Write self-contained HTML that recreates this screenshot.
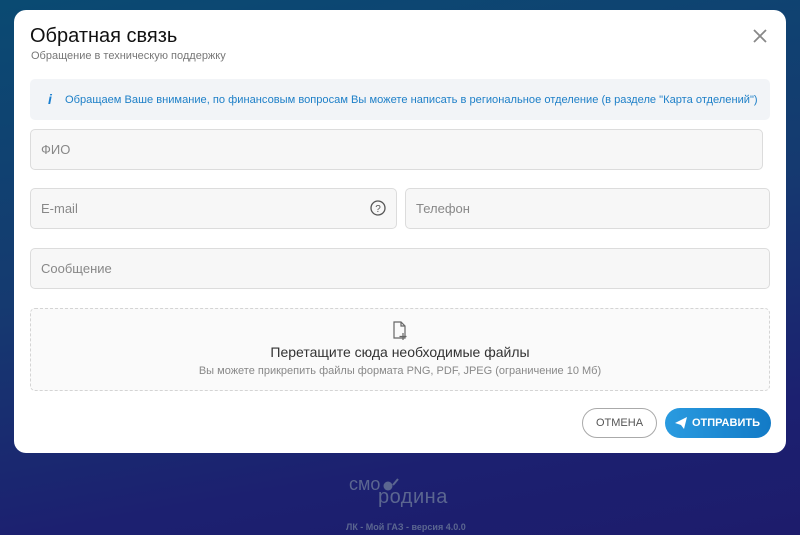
<!DOCTYPE html>
<html><head><meta charset="utf-8"><style>
*{box-sizing:border-box;margin:0;padding:0}
body{width:800px;height:535px;overflow:hidden;font-family:"Liberation Sans",sans-serif;background:linear-gradient(170deg,#0a4a72 0%,#153a70 45%,#1c2070 80%,#1d1c6c 100%);position:relative}
.m{position:absolute;left:14px;top:10px;width:772px;height:443px;background:#fff;border-radius:12px}
.ab{position:absolute}
.f{position:absolute;border:1px solid #dcdcdc;border-radius:5px;background:#f7f7f7;color:#888;font-size:13px;padding-left:10px;display:flex;align-items:center}
</style></head><body>
<div class="m">
<div class="ab" style="left:16px;top:15px;font-size:20px;color:#111">Обратная связь</div>
<div class="ab" style="left:17px;top:40px;font-size:11px;color:#777">Обращение в техническую поддержку</div>
<svg class="ab" style="left:738px;top:18px" width="16" height="16"><path d="M2 2L14 14M14 2L2 14" stroke="#888" stroke-width="1.8"/></svg>
<div class="ab" style="left:16px;top:69px;width:740px;height:41px;background:#f2f4f7;border-radius:5px"></div>
<div class="ab" style="left:34px;top:81px;font-size:14px;color:#1a7fd0;font-weight:bold;font-style:italic">i</div>
<div class="ab" style="left:51px;top:84px;font-size:11.1px;color:#1f80c8">Обращаем Ваше внимание, по финансовым вопросам Вы можете написать в региональное отделение (в разделе "Карта отделений")</div>
<div class="f" style="left:16px;top:119px;width:733px;height:41px">ФИО</div>
<div class="f" style="left:16px;top:178px;width:367px;height:41px">E-mail</div>
<svg class="ab" style="left:356px;top:190px" width="16" height="16"><circle cx="8" cy="8" r="7" fill="none" stroke="#555" stroke-width="1.3"/><text x="8" y="12" font-size="10" text-anchor="middle" fill="#555" font-family="Liberation Sans">?</text></svg>
<div class="f" style="left:391px;top:178px;width:365px;height:41px">Телефон</div>
<div class="f" style="left:16px;top:238px;width:740px;height:41px">Сообщение</div>
<div class="ab" style="left:16px;top:298px;width:740px;height:83px;border:1px dashed #d4d4d4;border-radius:5px;background:#fafafa"></div>
<svg class="ab" style="left:378px;top:311px" width="16" height="20"><path d="M2 1H9L13 5V17H2Z M9 1V5H13" fill="none" stroke="#666" stroke-width="1.2"/><path d="M11 12V19M7.5 15.5H14.5" stroke="#666" stroke-width="1.2"/></svg>
<div class="ab" style="left:0;width:772px;text-align:center;top:334px;font-size:14px;color:#333">Перетащите сюда необходимые файлы</div>
<div class="ab" style="left:0;width:772px;text-align:center;top:355px;font-size:11px;color:#888">Вы можете прикрепить файлы формата PNG, PDF, JPEG (ограничение 10 Мб)</div>
<div class="ab" style="left:568px;top:398px;width:75px;height:30px;border:1px solid #aaa;border-radius:15px;font-size:11px;color:#555;text-align:center;line-height:28px">ОТМЕНА</div>
<div class="ab" style="left:651px;top:398px;width:106px;height:30px;border-radius:15px;background:linear-gradient(90deg,#2a9be0,#127ac6);font-size:11px;color:#fff;font-weight:bold;line-height:30px;padding-left:27px">ОТПРАВИТЬ</div>
<svg class="ab" style="left:661px;top:407px" width="12" height="12"><path d="M0 6L12 0L9 12L6 8Z" fill="#fff"/></svg>
</div>
<div class="ab" style="left:349px;top:474px;font-size:18px;color:#5b6690">смо</div>
<svg class="ab" style="left:383px;top:478px" width="16" height="14"><circle cx="5" cy="8" r="4.5" fill="#5b6690"/><path d="M10 7L15 1" stroke="#5b6690" stroke-width="2"/></svg>
<div class="ab" style="left:378px;top:486px;font-size:20px;color:#5b6690;letter-spacing:0.5px">родина</div>
<div class="ab" style="left:346px;top:522px;font-size:9px;color:#5b6690;font-weight:bold">ЛК - Мой ГАЗ - версия 4.0.0</div>
</body></html>
